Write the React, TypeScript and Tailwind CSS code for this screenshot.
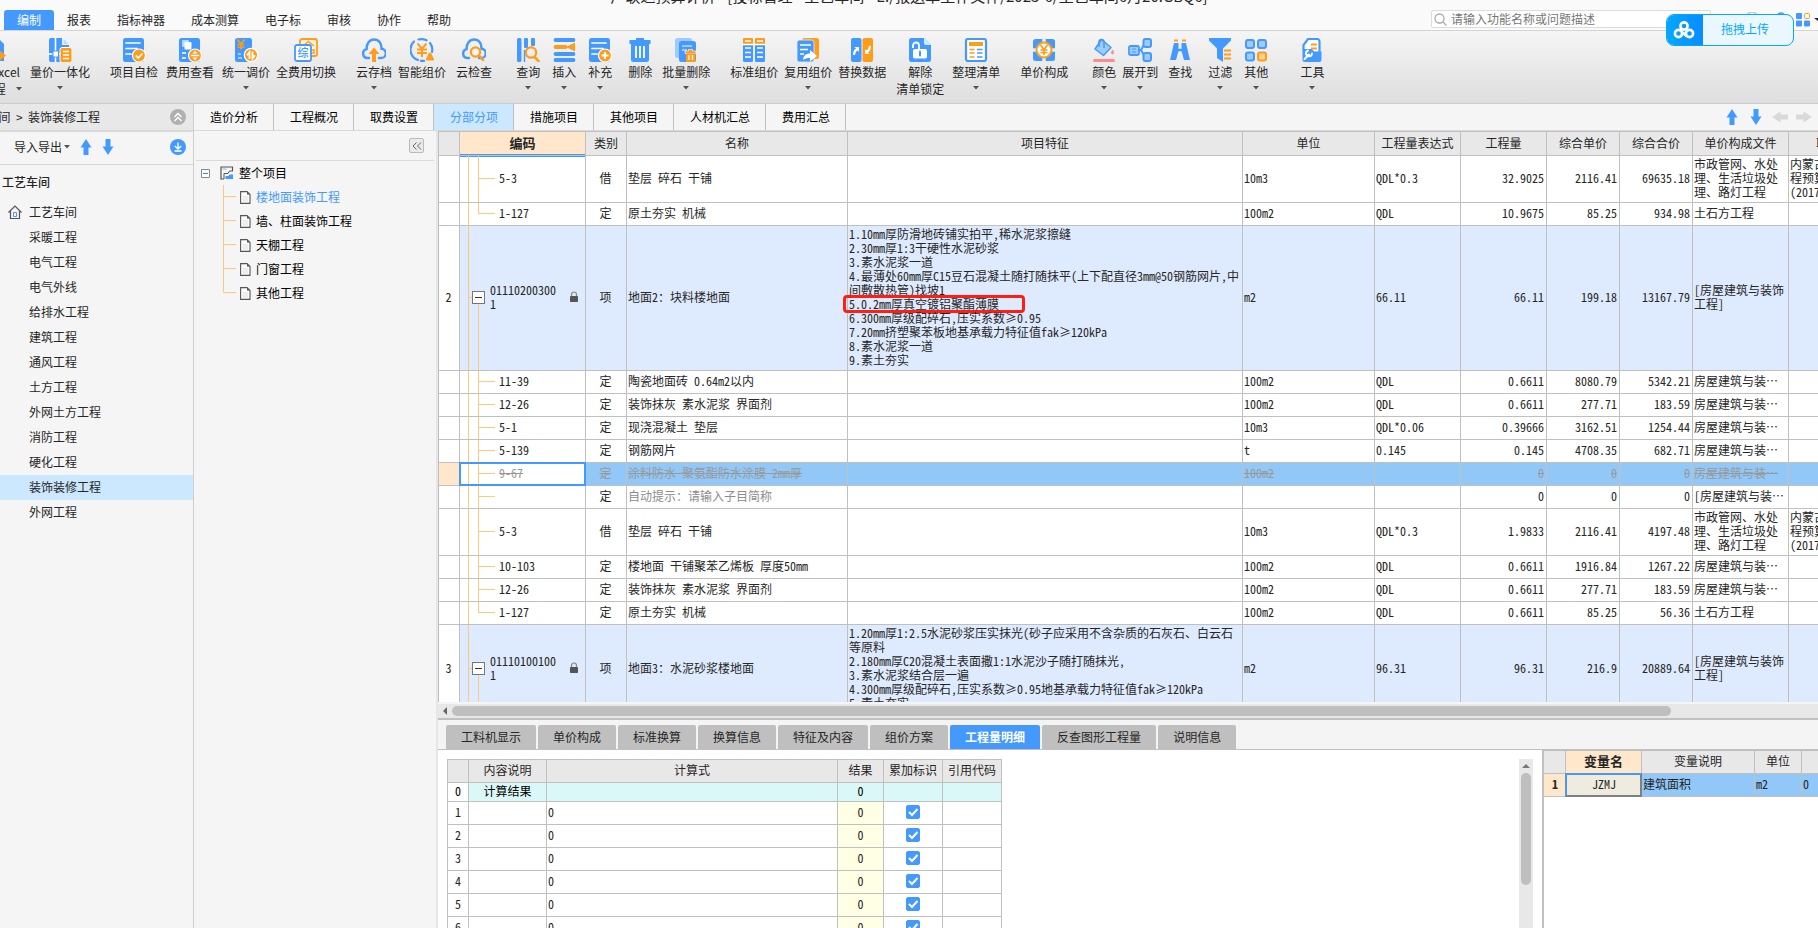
import { ReactNode } from 'react';
import clsx from 'clsx';

const BLUE = '#4499ff';
const ORANGE = '#ff9c1a';

/* ---------- 工具栏图标 ---------- */

function Svg({ children }: { children: ReactNode }) {
    return (
        <svg viewBox="0 0 24 24" className="size-6 shrink-0" fill="none" aria-hidden="true">
            {children}
        </svg>
    );
}

function Page() {
    return <rect x="1" y="0" width="21" height="24" rx="2.5" fill={BLUE} />;
}

function Yen({ x, y, color }: { x: number; y: number; color: string }) {
    return (
        <path
            d={`M${x - 3.5} ${y - 5}l3.5 4.5l3.5 -4.5M${x - 3.5} ${y}h7M${x - 3.5} ${y + 2.5}h7M${x} ${y - 0.5}v5.5`}
            stroke={color}
            strokeWidth="1.7"
        />
    );
}

const cloud = 'M7 20H5.5a4.5 4.5 0 0 1-.8-8.9C4.3 5.500 7.600 1.500 12.200 1.500s7.500 3.700 7.300 9.200a4.600 4.600 0 0 1-.8 9.300H17';

const icons: Record<string, ReactNode> = {
    excel: (
        <Svg>
            <path d="M2 0h14l6 6v17H2z" fill={BLUE} />
            <path d="M10 15h6v-4l8 6.500-8 6.500v-4h-6z" fill={ORANGE} />
        </Svg>
    ),
    integrate: (
        <Svg>
            <path d="M3 0h11v7h7v17H3a2 2 0 0 1-2-2V2a2 2 0 0 1 2-2z" fill={BLUE} />
            <path d="M15.500 1l5 5h-5z" fill="#b9dbff" />
            <path d="M7.500 0v24M0 16h13" stroke="#fff" strokeWidth="1.600" />
            <rect x="5" y="13" width="5.500" height="6" fill="#fff" stroke={BLUE} strokeWidth="1" />
            <rect x="12" y="9.500" width="12" height="15" rx="2" fill={ORANGE} stroke="#fff" strokeWidth="1" />
            <path d="M15 13.500h6M15 17h6M15 20.500h6" stroke="#fff" strokeWidth="1.500" />
        </Svg>
    ),
    check: (
        <Svg>
            <Page />
            <path d="M4 5h14M4 10.500h11M4 16h5" stroke="#fff" strokeWidth="1.700" strokeLinecap="round" />
            <circle cx="17" cy="17.500" r="6.500" fill={ORANGE} stroke="#fff" strokeWidth="1.200" />
            <path d="M13.800 17.500l2.500 2.500 4.200-4.500" stroke="#fff" strokeWidth="1.800" />
        </Svg>
    ),
    feeView: (
        <Svg>
            <Page />
            <rect x="4" y="2" width="7" height="7" rx="1" fill="#b9dbff" />
            <rect x="6.500" y="4" width="7" height="7.500" rx="1" fill="#fff" />
            <path d="M4 15h4M4 20h4" stroke="#fff" strokeWidth="1.700" />
            <circle cx="17" cy="17.500" r="6.500" fill={ORANGE} stroke="#fff" strokeWidth="1.200" />
            <path d="M12.800 17.500h8.400" stroke="#fff" strokeWidth="1.500" />
            <path d="M17 12.500l2.500 3h-5zM17 22.500l2.500-3h-5z" fill="#fff" />
        </Svg>
    ),
    adjust: (
        <Svg>
            <rect x="1" y="0" width="17" height="24" rx="2.500" fill={BLUE} />
            <Yen x={7} y={6.500} color={ORANGE} />
            <path d="M4 16h3M4 20h4" stroke="#b9dbff" strokeWidth="1.500" />
            <circle cx="17" cy="17" r="6.700" fill={ORANGE} stroke="#fff" strokeWidth="1.200" />
            <path d="M15.500 21v-7l-2.500 3.200M18.500 13.500v7l2.500-3.200" stroke="#fff" strokeWidth="1.800" />
        </Svg>
    ),
    switchFee: (
        <Svg>
            <rect x="6" y="1" width="17" height="17" rx="2" stroke={ORANGE} strokeWidth="1.800" fill="#fff2e0" />
            <path d="M9 8l5.500-4.500L20 8M14.500 7v3M17 12h3v3h-2" stroke={ORANGE} strokeWidth="1.500" />
            <rect x="1" y="7" width="16" height="16" rx="2" stroke={BLUE} strokeWidth="1.800" fill="#fff" />
            <text x="3.500" y="19" fontSize="11" fontWeight="500" fill={BLUE}>综</text>
        </Svg>
    ),
    cloudSave: (
        <Svg>
            <path d={cloud} stroke={BLUE} strokeWidth="2.400" strokeLinecap="round" />
            <path d="M12 9.500l5.500 6.500h-3.500v8h-4v-8H6.500z" fill={ORANGE} />
        </Svg>
    ),
    smart: (
        <Svg>
            <path d="M8 22A11 11 0 0 1 4 3.500M8.500 1.500a11 11 0 0 1 8 .8M20 5a11 11 0 0 1 2 9M11 22.900h3" stroke={BLUE} strokeWidth="2.200" strokeLinecap="round" />
            <path d="M7.500 5.500L12 11l4.500-5.500M7 11.500h10M7 15h10M12 11v8" stroke={ORANGE} strokeWidth="2" />
            <path d="M20 14.500c1.500 0 2 3 4 6.500 0 1-.5 1.500-1.500 1.500h-5c-1 0-1.500-.5-1.500-1.500 2-3.500 2.500-6.500 4-6.500z" fill={ORANGE} />
        </Svg>
    ),
    cloudCheck: (
        <Svg>
            <path d={cloud} stroke={BLUE} strokeWidth="2.400" strokeLinecap="round" />
            <circle cx="13.500" cy="14" r="4.600" stroke={ORANGE} strokeWidth="2.200" fill="#f4f4f4" />
            <path d="M17 17.500l4 4.500" stroke={ORANGE} strokeWidth="2.500" strokeLinecap="round" />
        </Svg>
    ),
    query: (
        <Svg>
            <rect x="1" y="0" width="4.500" height="24" rx="1.500" fill={BLUE} />
            <rect x="8" y="0" width="4" height="10" rx="1" fill={BLUE} />
            <rect x="15" y="0" width="4" height="8" rx="1" fill={BLUE} />
            <path d="M8.500 12v12" stroke={BLUE} strokeWidth="1.500" />
            <circle cx="15" cy="14.500" r="5.200" stroke={ORANGE} strokeWidth="2.200" />
            <path d="M18.500 19l4 4" stroke={ORANGE} strokeWidth="2.500" strokeLinecap="round" />
        </Svg>
    ),
    insert: (
        <Svg>
            <path d="M3.500 2h18M3.500 16h18M3.500 22h18" stroke={BLUE} strokeWidth="3.800" strokeLinecap="round" />
            <path d="M3.500 9h10" stroke={ORANGE} strokeWidth="3.800" strokeLinecap="round" />
            <path d="M14 9l9-4.500v9z" fill={ORANGE} />
        </Svg>
    ),
    supplement: (
        <Svg>
            <Page />
            <path d="M4 5h14M4 10.500h11M4 16h5" stroke="#fff" strokeWidth="1.700" strokeLinecap="round" />
            <circle cx="17" cy="17.500" r="6.500" fill={ORANGE} stroke="#fff" strokeWidth="1.200" />
            <path d="M17 14v7M13.500 17.500h7" stroke="#fff" strokeWidth="1.800" />
        </Svg>
    ),
    trash: (
        <Svg>
            <path d="M8 0h8v2h6.500v4h-21V2H8z" fill={BLUE} />
            <path d="M3 6h18v15.500a2.500 2.500 0 0 1-2.500 2.500h-13A2.500 2.500 0 0 1 3 21.500z" fill={BLUE} />
            <path d="M8 8v12M12 8v12M16 8v12" stroke="#fff" strokeWidth="1.800" />
        </Svg>
    ),
    batchTrash: (
        <Svg>
            <rect x="1" y="0" width="17" height="20" rx="2.500" fill="#9cccff" />
            <rect x="5" y="3" width="17" height="21" rx="2.500" fill={BLUE} />
            <path d="M8 8h10M8 12h5" stroke="#b9dbff" strokeWidth="1.600" />
            <path d="M11 13h3.500v-1.500h4V13H22v2.500H11z" fill={ORANGE} stroke="#fff" strokeWidth=".6" />
            <path d="M12 15.500h9.500v8.500H12z" fill={ORANGE} />
            <path d="M15 17v5M18.500 17v5" stroke="#fff" strokeWidth="1.300" />
        </Svg>
    ),
    standard: (
        <Svg>
            <rect x="1" y="0" width="10" height="24" rx="1.500" fill={BLUE} />
            <rect x="13" y="0" width="10" height="24" rx="1.500" fill={BLUE} />
            <path d="M1 6V1.500A1.500 1.500 0 0 1 2.500 0h7A1.500 1.500 0 0 1 11 1.500V6zM13 6V1.500A1.500 1.500 0 0 1 14.500 0h7A1.500 1.500 0 0 1 23 1.500V6z" fill={ORANGE} />
            <path d="M3 3h6M15 3h6M3 10h6M3 14.500h6M3 19h6M15 10h6M15 14.500h6M15 19h6M1 6.500h10M13 6.500h10" stroke="#fff" strokeWidth="1.400" />
        </Svg>
    ),
    reuse: (
        <Svg>
            <rect x="6" y="0" width="17" height="21" rx="2.500" fill={ORANGE} />
            <rect x="1" y="2" width="17" height="22" rx="2.500" fill={BLUE} stroke="#eee" strokeWidth=".8" />
            <path d="M4 7h11M4 11.500h8M4 16h4" stroke="#fff" strokeWidth="1.600" />
            <path d="M7 22c.5-4.500 3-6.500 7-6.500V12l7 6-7 5.500V20c-3 0-5 .5-7 2z" fill="#fff" />
        </Svg>
    ),
    replace: (
        <Svg>
            <rect x="1" y="0" width="10.500" height="24" rx="2" fill={BLUE} />
            <rect x="12.500" y="0" width="10.500" height="24" rx="2" fill={ORANGE} />
            <path d="M3 17c0-3 .5-5 3-6.500L4.500 9H9v5l-1.500-1.500C5.500 14 5.500 15 5 17z" fill="#fff" />
            <path d="M21 8c0 3-1 5-3 6.500l1.500 1.500H15v-5l1.500 1.500C18 11.500 18.500 10 19 8z" fill="#fff" />
        </Svg>
    ),
    unlock: (
        <Svg>
            <path d="M3.500 0H16l7 7v14.500a2.500 2.500 0 0 1-2.500 2.500h-17A2.500 2.500 0 0 1 1 21.500v-19A2.500 2.500 0 0 1 3.500 0z" fill={BLUE} />
            <path d="M16 0l7 7h-5a2 2 0 0 1-2-2z" fill="#d5e9ff" />
            <path d="M5 10V7.500a3 3 0 0 1 6 0V11" stroke="#fff" strokeWidth="1.800" />
            <rect x="5" y="11" width="14" height="9.500" rx="1.800" fill="#fff" />
            <path d="M12 13.500v4" stroke={BLUE} strokeWidth="2" strokeLinecap="round" />
        </Svg>
    ),
    tidy: (
        <Svg>
            <rect x="2" y="1" width="20" height="22" rx="2" stroke={BLUE} strokeWidth="2.200" fill="#fff" />
            <rect x="5" y="4" width="14" height="4" fill={ORANGE} />
            <path d="M5.500 11.500h5M5.500 15h5M5.500 19h5" stroke={ORANGE} strokeWidth="1.700" />
            <path d="M13 11.500h5.500M13 15h5.500M13 19h5.500" stroke={BLUE} strokeWidth="1.700" />
        </Svg>
    ),
    compose: (
        <Svg>
            <rect x="1" y="1" width="22" height="22" rx="2.500" fill={BLUE} />
            <path d="M12 0v24M0 12h24" stroke="#ececec" strokeWidth="3.500" />
            <circle cx="12" cy="12" r="7.500" fill="#fff" stroke={ORANGE} strokeWidth="2" />
            <Yen x={12} y={12} color={ORANGE} />
        </Svg>
    ),
    color: (
        <Svg>
            <path d="M9.500 1.500L19 9.500l-7.500 8L3 11z" fill="#9cccff" stroke={BLUE} strokeWidth="1.500" strokeLinejoin="round" />
            <path d="M7 9V4a2.500 2.500 0 0 1 5 0v6" stroke={BLUE} strokeWidth="1.500" />
            <path d="M20.500 11.500c1 1.500 1.500 2.500 1.500 3.300a1.500 1.500 0 0 1-3 0c0-.8.5-1.800 1.500-3.300z" fill="#ff8c8c" />
            <rect x="1" y="21" width="22" height="3" rx="1.500" fill="#ff8c8c" />
        </Svg>
    ),
    expand: (
        <Svg>
            <path d="M9 12h4M13 12L17 5M13 12l4 7" stroke={BLUE} strokeWidth="2" />
            <rect x="1" y="8" width="10" height="9" rx="1.500" fill="#9cccff" stroke={BLUE} strokeWidth="1.800" />
            <path d="M4 11h4M4 14h4" stroke={BLUE} strokeWidth="1.200" />
            <rect x="15.500" y="1" width="7.500" height="8" rx="2" fill="#9cccff" stroke={BLUE} strokeWidth="2" />
            <rect x="15.500" y="15" width="7.500" height="8" rx="2" fill="#9cccff" stroke={BLUE} strokeWidth="2" />
        </Svg>
    ),
    find: (
        <Svg>
            <path d="M6 1.500h4v2H6zM14 1.500h4v2h-4z" fill={ORANGE} />
            <path d="M6 5h4.500v8L8 22H2zM18 5h-4.500v8L16 22h6z" fill={BLUE} />
            <path d="M10 12h4" stroke={BLUE} strokeWidth="2.500" />
        </Svg>
    ),
    filter: (
        <Svg>
            <path d="M1 0h22v2.500l-8 8V24l-6-4v-9.500l-8-8z" fill={BLUE} />
            <path d="M16 12.500h7M16 16.500h7M16 20.500h7" stroke={ORANGE} strokeWidth="2" />
        </Svg>
    ),
    other: (
        <Svg>
            <rect x="2" y="2" width="8" height="8" rx="2" fill="#9cccff" stroke={BLUE} strokeWidth="2" />
            <rect x="14" y="2" width="8" height="8" rx="2" fill="#9cccff" stroke={BLUE} strokeWidth="2" />
            <rect x="2" y="14.500" width="8" height="8" rx="2" fill="#9cccff" stroke={BLUE} strokeWidth="2" />
            <rect x="14" y="14.500" width="8" height="8" rx="2" fill="#ffd08f" stroke={ORANGE} strokeWidth="2" />
        </Svg>
    ),
    tool: (
        <Svg>
            <path d="M3.500 12V7l4.500-6h9a2.500 2.500 0 0 1 2.500 2.500V14" stroke={BLUE} strokeWidth="2.200" fill="#fff" />
            <path d="M11 6.500h6M11 10.500h6" stroke={ORANGE} strokeWidth="2.200" />
            <path d="M2.500 11h9l3 2.500h7v8a2.500 2.500 0 0 1-2.500 2.500h-14a2.500 2.500 0 0 1-2.500-2.500z" fill={BLUE} />
            <path d="M4.500 21l4.500-4.500M8 12.500a3 3 0 1 0 4 3" stroke="#fff" strokeWidth="1.900" strokeLinecap="round" />
        </Svg>
    ),
};

interface Tool {
    icon: string;
    label: string;
    second?: string;
    menu?: boolean;
    gap: string;
}

const tools: Tool[] = [
    { icon: 'integrate', label: '量价一体化', menu: true, gap: 'ml-2.5' },
    { icon: 'check', label: '项目自检', gap: 'ml-5' },
    { icon: 'feeView', label: '费用查看', gap: 'ml-2' },
    { icon: 'adjust', label: '统一调价', menu: true, gap: 'ml-2' },
    { icon: 'switchFee', label: '全费用切换', gap: 'ml-1.5' },
    { icon: 'cloudSave', label: '云存档', menu: true, gap: 'ml-5' },
    { icon: 'smart', label: '智能组价', gap: 'ml-1.5' },
    { icon: 'cloudCheck', label: '云检查', gap: 'ml-2.5' },
    { icon: 'query', label: '查询', menu: true, gap: 'ml-6' },
    { icon: 'insert', label: '插入', menu: true, gap: 'ml-3' },
    { icon: 'supplement', label: '补充', menu: true, gap: 'ml-3' },
    { icon: 'trash', label: '删除', gap: 'ml-4' },
    { icon: 'batchTrash', label: '批量删除', menu: true, gap: 'ml-2.5' },
    { icon: 'standard', label: '标准组价', gap: 'ml-5' },
    { icon: 'reuse', label: '复用组价', menu: true, gap: 'ml-1.5' },
    { icon: 'replace', label: '替换数据', gap: 'ml-1.5' },
    { icon: 'unlock', label: '解除', second: '清单锁定', gap: 'ml-2.5' },
    { icon: 'tidy', label: '整理清单', menu: true, gap: 'ml-2' },
    { icon: 'compose', label: '单价构成', gap: 'ml-5' },
    { icon: 'color', label: '颜色', menu: true, gap: 'ml-6' },
    { icon: 'expand', label: '展开到', menu: true, gap: 'ml-1.5' },
    { icon: 'find', label: '查找', gap: 'ml-2.5' },
    { icon: 'filter', label: '过滤', menu: true, gap: 'ml-4' },
    { icon: 'other', label: '其他', menu: true, gap: 'ml-3' },
    { icon: 'tool', label: '工具', menu: true, gap: 'ml-8' },
];

function Caret() {
    return (
        <svg viewBox="0 0 6 4" className="h-1 w-1.5 shrink-0" aria-hidden="true">
            <path d="M0 0h6L3 3.500z" fill="#555" />
        </svg>
    );
}

function Arrow({ dir, color }: { dir: 'up' | 'down' | 'left' | 'right'; color: string }) {
    return (
        <svg
            viewBox="0 0 16 16"
            className={clsx('size-4', dir === 'down' && 'rotate-180', dir === 'left' && '-rotate-90', dir === 'right' && 'rotate-90')}
            aria-hidden="true"
        >
            <path d="M8 0l5.500 8.500h-3V16h-5V8.500h-3z" fill={color} />
        </svg>
    );
}

/* ---------- 顶部 ---------- */

const menus = ['编制', '报表', '指标神器', '成本测算', '电子标', '审核', '协作', '帮助'];

function Header() {
    return (
        <header className="relative h-[31px] shrink-0 border-b border-[#d4d4d4] bg-[#fafafa]">
            <div className="flex h-2.5 justify-center overflow-hidden">
                <p className="-mt-3 h-4 whitespace-nowrap text-[15px] leading-4">
                    广联达预算计价 - [投标管理 - 工艺车间 - E:/报送单工作文件/2023-6/工艺车间6月20.GBQ6]
                </p>
            </div>
            <div className="flex h-5 items-stretch pl-1">
                <nav className="flex">
                    {menus.map((m, i) => (
                        <a key={m} href="#" className={clsx('flex items-center px-[13px]', i === 0 && 'rounded-t-[3px] bg-[#4499ff] text-white')}>
                            {m}
                        </a>
                    ))}
                </nav>
                <label className="ml-auto mr-[107px] flex h-[18px] w-[280px] items-center gap-1 rounded-xs border border-[#dcdcdc] bg-white pl-0.5">
                    <svg viewBox="0 0 13 13" className="size-[13px] shrink-0" fill="none" stroke="#aaa" strokeWidth="1.300" aria-hidden="true">
                        <circle cx="5.500" cy="5.500" r="4.500" />
                        <path d="M9 9l3.500 3.500" />
                    </svg>
                    <input
                        aria-label="搜索功能"
                        placeholder="请输入功能名称或问题描述"
                        className="w-full bg-transparent outline-none placeholder:text-[#777777]"
                    />
                </label>
            </div>
            <div className="absolute right-0 top-3">
                <svg viewBox="0 0 74 15" className="h-[15px] w-[74px]" fill="none" aria-hidden="true">
                    <circle cx="8" cy="6" r="6" stroke="#a9d2ff" strokeWidth="1.500" />
                    <circle cx="37" cy="5" r="4" stroke={BLUE} strokeWidth="1.500" />
                    <rect x="52" y="1" width="6" height="6" rx="1" fill={BLUE} />
                    <rect x="60.500" y="1.500" width="5" height="5" rx="1" stroke={ORANGE} />
                    <rect x="52" y="8.500" width="6" height="6" rx="1" fill={BLUE} />
                    <rect x="60" y="8.500" width="6" height="6" rx="1" fill={BLUE} />
                    <path d="M70 6h4v3z" fill="#222" />
                </svg>
            </div>
            <button type="button" className="absolute right-6 top-3.5 z-10 flex h-8 w-32 overflow-hidden rounded-lg border border-[#06a7ff] bg-[#ebf7ff] text-[#06a7ff]">
                <span className="flex h-full w-9 items-center justify-center bg-gradient-to-r from-[#06a7ff] to-[#0a8cff] pr-0.5">
                    <svg viewBox="0 0 22 20" className="h-5 w-[22px]" fill="none" stroke="#fff" strokeWidth="2.600" aria-hidden="true">
                        <circle cx="11" cy="6" r="3.600" />
                        <circle cx="5.500" cy="13.500" r="3.600" />
                        <circle cx="16.500" cy="13.500" r="3.600" />
                        <path d="M8.500 11.500l5 4.500" />
                    </svg>
                </span>
                <span className="flex h-full flex-1 items-center justify-center pb-0.5 pr-1.5">拖拽上传</span>
            </button>
        </header>
    );
}

function Toolbar() {
    return (
        <div className="flex h-[73px] shrink-0 items-start whitespace-nowrap border-b border-[#cccccc] bg-gradient-to-b from-[#f5f5f5] to-[#dedede] pt-[7px]">
            <div className="flex w-5 shrink-0 justify-end">
                <button type="button" className="flex shrink-0 flex-col items-center">
                    {icons.excel}
                    <span className="mt-px leading-[18px]">导入Excel</span>
                    <span className="relative leading-4">
                        工程
                        <span className="absolute -right-4 top-1.5 flex">
                            <Caret />
                        </span>
                    </span>
                </button>
            </div>
            {tools.map((t) => (
                <button key={t.label} type="button" className={clsx('flex shrink-0 flex-col items-center', t.gap)}>
                    {icons[t.icon]}
                    <span className="mt-px leading-[18px]">{t.label}</span>
                    {t.second && <span className="leading-4">{t.second}</span>}
                    {t.menu && (
                        <span className="flex h-3.5 items-center">
                            <Caret />
                        </span>
                    )}
                </button>
            ))}
        </div>
    );
}

/* ---------- 左侧单位工程 ---------- */

const units = [
    '工艺车间', '采暖工程', '电气工程', '电气外线', '给排水工程', '建筑工程', '通风工程',
    '土方工程', '外网土方工程', '消防工程', '硬化工程', '装饰装修工程', '外网工程',
];

function UnitSidebar() {
    return (
        <aside className="w-[194px] shrink-0 overflow-hidden border-r border-[#cfcfcf]">
            <div className="flex h-7 items-center justify-between border-b-2 border-[#d9d9d9] bg-[#e8e8e8] pr-[7px]">
                <div className="flex w-[100px] justify-end whitespace-nowrap">工艺车间 &nbsp;&gt;&nbsp; 装饰装修工程</div>
                <button type="button" aria-label="收起">
                    <svg viewBox="0 0 16 16" className="size-4" aria-hidden="true">
                        <circle cx="8" cy="8" r="8" fill="#b0b0b0" />
                        <path d="M4.500 8L8 4.500 11.500 8M4.500 12L8 8.500l3.500 3.500" stroke="#fff" strokeWidth="1.400" fill="none" />
                    </svg>
                </button>
            </div>
            <div className="flex h-[33px] items-center border-b border-[#d4d4d4] pb-0.5 pl-3.5 pr-[7px]">
                <button type="button" className="flex items-center gap-0.5">
                    导入导出
                    <Caret />
                </button>
                <button type="button" aria-label="上移" className="ml-2"><Arrow dir="up" color={BLUE} /></button>
                <button type="button" aria-label="下移" className="ml-1.5"><Arrow dir="down" color={BLUE} /></button>
                <button type="button" aria-label="下载" className="ml-auto">
                    <svg viewBox="0 0 16 16" className="size-4" aria-hidden="true">
                        <circle cx="8" cy="8" r="8" fill={BLUE} />
                        <path d="M8 3.500v6M4.800 7L8 10l3.200-3M4.500 12h7" stroke="#fff" strokeWidth="1.400" fill="none" />
                    </svg>
                </button>
            </div>
            <h2 className="flex h-[35px] items-center pb-0.5 pl-0.5 font-medium">工艺车间</h2>
            <ul>
                {units.map((u, i) => (
                    <li key={u}>
                        <a href="#" className={clsx('flex h-[25px] items-center pb-0.5', u === '装饰装修工程' && 'bg-[#cce8ff]')}>
                            <span className="flex w-[29px] pl-2">
                                {i === 0 && (
                                    <svg viewBox="0 0 14 14" className="size-3.5" fill="none" aria-hidden="true">
                                        <path d="M.5 7.500L7 1l6.500 6.500M2.500 6v7.500h9V6" stroke="#555" strokeWidth="1.200" />
                                        <path d="M5.500 7.500h3v4h-3z" stroke={BLUE} />
                                    </svg>
                                )}
                            </span>
                            {u}
                        </a>
                    </li>
                ))}
            </ul>
        </aside>
    );
}

/* ---------- 分部树 ---------- */

const sections = ['楼地面装饰工程', '墙、柱面装饰工程', '天棚工程', '门窗工程', '其他工程'];

function SectionTree() {
    return (
        <aside className="w-[244px] shrink-0 border-r-2 border-[#e6e6e6] text-black">
            <div className="mx-0.5 flex h-[30px] items-center justify-end border-b border-[#d9d9d9] pr-2.5">
                <button type="button" aria-label="折叠" className="flex size-[15px] items-center justify-center rounded-xs border border-[#bbbbbb] bg-[#eaeaea]">
                    <svg viewBox="0 0 10 8" className="h-2 w-2.5" fill="none" stroke="#666" aria-hidden="true">
                        <path d="M4.500 .5L1 4l3.500 3.500M9 .5L5.500 4 9 7.500" />
                    </svg>
                </button>
            </div>
            <div className="flex h-6 items-center pl-[7px]">
                <svg viewBox="0 0 9 9" className="size-[9px]" fill="none" aria-hidden="true">
                    <path d="M.5.5h8v8h-8z" stroke="#888" fill="#fff" />
                    <path d="M2 4.500h5" stroke="#1d9bd1" />
                </svg>
                <svg viewBox="0 0 14 14" className="ml-2.5 size-3.5" fill="none" aria-hidden="true">
                    <path d="M12.500 5V1H1v12h3" stroke="#555" strokeWidth="1.200" />
                    <path d="M2.500 3h4" stroke="#9cccff" strokeWidth="1.500" />
                    <path d="M4 13V7.500h4L9.500 5H13" stroke="#555" />
                    <path d="M5.500 10h3l1-1.500H13V13H5.500z" fill={BLUE} />
                </svg>
                <span className="ml-[5px]">整个项目</span>
            </div>
            <ul>
                {sections.map((s, i) => (
                    <li key={s} className="flex h-6 items-center pl-[29px]">
                        <svg viewBox="0 0 14 24" className="h-6 w-3.5" fill="none" stroke="#ffc87d" aria-hidden="true">
                            <path d={i === sections.length - 1 ? 'M.5 0V11.5H13' : 'M.5 0V24M.5 11.5H13'} />
                        </svg>
                        <svg viewBox="0 0 11 13" className="ml-[3px] h-[13px] w-[11px]" fill="#fff" aria-hidden="true">
                            <path d="M.6.6h6.400L10 3.600V12.400H.6z" stroke="#555" strokeWidth="1.100" />
                            <path d="M7 .6V3.600h3z" fill="#555" />
                            <path d="M2.500 6h5.500M2.500 8h5.500M2.500 10h5.500" stroke="#ddd" />
                        </svg>
                        <a href="#" className={clsx('ml-[5px]', i === 0 && 'text-[#4499ff]')}>{s}</a>
                    </li>
                ))}
            </ul>
        </aside>
    );
}

/* ---------- 清单表格 ---------- */

interface Row {
    no?: string;
    code: string[];
    kind: string;
    name: string;
    feature?: string[];
    unit?: string;
    expr?: string;
    qty: string;
    price: string;
    total: string;
    file: string[];
    major?: string[];
    state?: 'item' | 'selected' | 'hint';
    last?: boolean;
}

const PIPE = ['市政管网、水处', '理、生活垃圾处', '理、路灯工程'];
const MAJOR = ['内蒙古自治区市政工', '程预算定额', '(2017)'];
const HOUSE = ['房屋建筑与装…'];

const rows: Row[] = [
    { code: ['5-3'], kind: '借', name: '垫层 碎石 干铺', unit: '10m3', expr: 'QDL*0.3', qty: '32.9025', price: '2116.41', total: '69635.18', file: PIPE, major: MAJOR },
    { code: ['1-127'], kind: '定', name: '原土夯实 机械', unit: '100m2', expr: 'QDL', qty: '10.9675', price: '85.25', total: '934.98', file: ['土石方工程'], last: true },
    {
        no: '2',
        code: ['01110200300', '1'],
        kind: '项',
        name: '地面2：块料楼地面',
        feature: [
            '1.10mm厚防滑地砖铺实拍平,稀水泥浆擦缝',
            '2.30mm厚1:3干硬性水泥砂浆',
            '3.素水泥浆一道',
            '4.最薄处60mm厚C15豆石混凝土随打随抹平(上下配直径3mm@50钢筋网片,中',
            '间敷散热管)找坡1',
            '5.0.2mm厚真空镀铝聚酯薄膜',
            '6.300mm厚级配碎石,压实系数≥0.95',
            '7.20mm挤塑聚苯板地基承载力特征值fak≥120kPa',
            '8.素水泥浆一道',
            '9.素土夯实',
        ],
        unit: 'm2', expr: '66.11', qty: '66.11', price: '199.18', total: '13167.79',
        file: ['[房屋建筑与装饰', '工程]'],
        state: 'item',
    },
    { code: ['11-39'], kind: '定', name: '陶瓷地面砖 0.64m2以内', unit: '100m2', expr: 'QDL', qty: '0.6611', price: '8080.79', total: '5342.21', file: HOUSE },
    { code: ['12-26'], kind: '定', name: '装饰抹灰 素水泥浆 界面剂', unit: '100m2', expr: 'QDL', qty: '0.6611', price: '277.71', total: '183.59', file: HOUSE },
    { code: ['5-1'], kind: '定', name: '现浇混凝土 垫层', unit: '10m3', expr: 'QDL*0.06', qty: '0.39666', price: '3162.51', total: '1254.44', file: HOUSE },
    { code: ['5-139'], kind: '定', name: '钢筋网片', unit: 't', expr: '0.145', qty: '0.145', price: '4708.35', total: '682.71', file: HOUSE },
    { code: ['9-67'], kind: '定', name: '涂料防水 聚氨酯防水涂膜 2mm厚', unit: '100m2', qty: '0', price: '0', total: '0', file: HOUSE, state: 'selected' },
    { code: [''], kind: '定', name: '自动提示：请输入子目简称', qty: '0', price: '0', total: '0', file: ['[房屋建筑与装…'], state: 'hint' },
    { code: ['5-3'], kind: '借', name: '垫层 碎石 干铺', unit: '10m3', expr: 'QDL*0.3', qty: '1.9833', price: '2116.41', total: '4197.48', file: PIPE, major: MAJOR },
    { code: ['10-103'], kind: '定', name: '楼地面 干铺聚苯乙烯板 厚度50mm', unit: '100m2', expr: 'QDL', qty: '0.6611', price: '1916.84', total: '1267.22', file: HOUSE },
    { code: ['12-26'], kind: '定', name: '装饰抹灰 素水泥浆 界面剂', unit: '100m2', expr: 'QDL', qty: '0.6611', price: '277.71', total: '183.59', file: HOUSE },
    { code: ['1-127'], kind: '定', name: '原土夯实 机械', unit: '100m2', expr: 'QDL', qty: '0.6611', price: '85.25', total: '56.36', file: ['土石方工程'], last: true },
    {
        no: '3',
        code: ['01110100100', '1'],
        kind: '项',
        name: '地面3：水泥砂浆楼地面',
        feature: [
            '1.20mm厚1:2.5水泥砂浆压实抹光(砂子应采用不含杂质的石灰石、白云石',
            '等原料',
            '2.180mm厚C20混凝土表面撒1:1水泥沙子随打随抹光,',
            '3.素水泥浆结合层一遍',
            '4.300mm厚级配碎石,压实系数≥0.95地基承载力特征值fak≥120kPa',
            '5.素土夯实',
        ],
        unit: 'm2', expr: '96.31', qty: '96.31', price: '216.9', total: '20889.64',
        file: ['[房屋建筑与装饰', '工程]'],
        state: 'item',
    },
];

const HEADS = ['类别', '名称', '项目特征', '单位', '工程量表达式', '工程量', '综合单价', '综合合价', '单价构成文件', '取费专业'];

function Lines({ text }: { text?: string[] }) {
    return <>{text?.map((t) => <div key={t}>{t}</div>)}</>;
}

function CodeCell({ row }: { row: Row }) {
    const item = row.state === 'item';
    return (
        <td className={clsx('relative', row.state === 'selected' && 'bg-white')}>
            <span className="absolute inset-y-0 left-2 w-px bg-[#ffc87d]" />
            {item ? (
                <>
                    <span className="absolute left-2 top-1/2 -mt-px h-px w-1 bg-[#ffc87d]" />
                    <span className="absolute bottom-0 left-[18px] top-1/2 w-px bg-[#ffc87d]" />
                </>
            ) : (
                <>
                    <span className={clsx('absolute left-[18px] top-0 w-px bg-[#ffc87d]', row.last ? 'bottom-1/2' : 'bottom-0')} />
                    <span className="absolute left-[18px] top-1/2 -mt-px h-px w-[17px] bg-[#ffc87d]" />
                </>
            )}
            {row.state === 'selected' && <span className="absolute -inset-px border-2 border-[#4499ff]" />}
            {item ? (
                <div className="relative flex items-center pl-[11px] pr-1">
                    <button type="button" aria-label="折叠子目" className="flex size-[13px] items-center justify-center border border-[#777777] bg-white">
                        <span className="h-px w-[7px] bg-[#333333]" />
                    </button>
                    <div className="ml-[5px] flex-1">
                        <Lines text={row.code} />
                    </div>
                    <svg viewBox="0 0 10 12" className="h-3 w-2.5" aria-hidden="true">
                        <path d="M2.500 6V3.500a2.500 2.500 0 0 1 5 0V6" stroke="#888" strokeWidth="1.200" fill="none" />
                        <rect x="1" y="5" width="8" height="6" rx=".8" fill="#555" />
                    </svg>
                </div>
            ) : (
                <div className="pl-[38px]">
                    <Lines text={row.code} />
                </div>
            )}
        </td>
    );
}

function BillGrid() {
    return (
        <div className="min-h-0 flex-1 overflow-hidden bg-white">
            <table className="w-[calc(100%+74px)] table-fixed border-separate border-spacing-0 border-l border-t border-[#c0c0c0] leading-[14px] [font-feature-settings:'hwid'] [&_td]:whitespace-nowrap [&_td]:border-b [&_td]:border-r [&_td]:border-[#c0c0c0] [&_td]:pb-[3px] [&_td]:pl-px [&_td]:pr-0.5 [&_td]:pt-px [&_th]:border-b [&_th]:border-r [&_th]:border-[#c0c0c0] [&_th]:pb-0.5">
                <colgroup>
                    <col className="w-[21px]" />
                    <col className="w-[126px]" />
                    <col className="w-[41px]" />
                    <col className="w-[221px]" />
                    <col className="w-[395px]" />
                    <col className="w-[132px]" />
                    <col className="w-[86px]" />
                    <col className="w-[86px]" />
                    <col className="w-[73px]" />
                    <col className="w-[73px]" />
                    <col className="w-[96px]" />
                    <col />
                </colgroup>
                <thead>
                    <tr className="h-6 bg-[#e8e8e8]">
                        <th aria-label="序号" />
                        <th className="bg-[#ffe7cc] text-[13px] font-bold shadow-[inset_0_-1px_0_#4499ff,0_1px_0_#4499ff]">编码</th>
                        {HEADS.map((h) => (
                            <th key={h} className="font-normal">{h}</th>
                        ))}
                    </tr>
                </thead>
                <tbody>
                    {rows.map((r, i) => (
                        <tr
                            key={i}
                            className={clsx(
                                'h-[23px]',
                                r.state === 'item' && 'bg-[#deeafe]',
                                r.state === 'selected' && 'bg-[#91c8f8] text-[#999999] line-through',
                            )}
                        >
                            <td className={clsx('text-center', r.state === 'selected' ? 'bg-[#ffe7cc]' : 'bg-white')}>{r.no}</td>
                            <CodeCell row={r} />
                            <td className="text-center">{r.kind}</td>
                            <td className={clsx(r.state === 'hint' && 'text-[#8c8c8c]')}>{r.name}</td>
                            <td>
                                {r.feature?.map((f, n) => (
                                    <div key={f} className="relative">
                                        {f}
                                        {r.no === '2' && n === 5 && (
                                            <span className="absolute -left-1.5 -top-0.5 h-[18px] w-[182px] rounded-sm border-[3px] border-[#ff1e12]" />
                                        )}
                                    </div>
                                ))}
                            </td>
                            <td>{r.unit}</td>
                            <td>{r.expr}</td>
                            <td className="text-right">{r.qty}</td>
                            <td className="text-right">{r.price}</td>
                            <td className="text-right">{r.total}</td>
                            <td><Lines text={r.file} /></td>
                            <td><Lines text={r.major} /></td>
                        </tr>
                    ))}
                </tbody>
            </table>
        </div>
    );
}

/* ---------- 底部明细 ---------- */

const detailTabs = ['工料机显示', '单价构成', '标准换算', '换算信息', '特征及内容', '组价方案', '工程量明细', '反查图形工程量', '说明信息'];

function DetailTable() {
    return (
        <table className="w-[555px] table-fixed border-separate border-spacing-0 self-start border-l border-t border-[#c0c0c0] text-center leading-[14px] [font-feature-settings:'hwid'] [&_td]:border-b [&_td]:border-r [&_td]:border-[#c0c0c0] [&_td]:pb-0.5 [&_th]:border-b [&_th]:border-r [&_th]:border-[#c0c0c0] [&_th]:pb-0.5 [&_th]:font-normal">
            <colgroup>
                <col className="w-[21px]" />
                <col className="w-[78px]" />
                <col className="w-[291px]" />
                <col className="w-[46px]" />
                <col className="w-[59px]" />
                <col className="w-[59px]" />
            </colgroup>
            <thead>
                <tr className="h-[23px] bg-[#e8e8e8]">
                    <th aria-label="序号" />
                    <th>内容说明</th>
                    <th>计算式</th>
                    <th>结果</th>
                    <th>累加标识</th>
                    <th>引用代码</th>
                </tr>
            </thead>
            <tbody>
                <tr className="h-[19px] bg-[#dbf8f8] text-black">
                    <td className="bg-white">0</td>
                    <td>计算结果</td>
                    <td />
                    <td>0</td>
                    <td />
                    <td />
                </tr>
                {[1, 2, 3, 4, 5, 6].map((n) => (
                    <tr key={n} className="h-[23px]">
                        <td>{n}</td>
                        <td />
                        <td className="pl-px text-left">0</td>
                        <td className="bg-[#ffffe6]">0</td>
                        <td>
                            <label className="grid place-items-center">
                                <input
                                    type="checkbox"
                                    defaultChecked
                                    aria-label={`第${n}行累加标识`}
                                    className="col-start-1 row-start-1 size-3.5 appearance-none rounded-xs border border-[#4499ff] checked:bg-[#4499ff]"
                                />
                                <svg viewBox="0 0 14 14" className="pointer-events-none col-start-1 row-start-1 size-3.5" fill="none" aria-hidden="true">
                                    <path d="M3 7l3 3 5.500-6" stroke="#fff" strokeWidth="2" />
                                </svg>
                            </label>
                        </td>
                        <td />
                    </tr>
                ))}
            </tbody>
        </table>
    );
}

function VariableTable() {
    return (
        <div className="w-[276px] shrink-0 overflow-hidden border-l-2 border-t border-[#c0c0c0]">
            <table className="w-[306px] table-fixed border-separate border-spacing-0 leading-[14px] [font-feature-settings:'hwid'] [&_td]:border-b [&_td]:border-r [&_td]:border-[#c0c0c0] [&_td]:pb-0.5 [&_td]:pl-px [&_th]:border-b [&_th]:border-r [&_th]:border-[#c0c0c0] [&_th]:pb-0.5">
                <colgroup>
                    <col className="w-[22px]" />
                    <col className="w-[76px]" />
                    <col className="w-[113px]" />
                    <col className="w-[47px]" />
                    <col />
                </colgroup>
                <thead>
                    <tr className="h-[23px] bg-[#e8e8e8]">
                        <th aria-label="序号" />
                        <th className="bg-[#ffe7cc] text-[13px] font-bold">变量名</th>
                        <th className="font-normal">变量说明</th>
                        <th className="font-normal">单位</th>
                        <th aria-label="值" />
                    </tr>
                </thead>
                <tbody>
                    <tr className="h-[23px] bg-[#91c8f8]">
                        <td className="bg-[#ffe7cc] text-center font-bold">1</td>
                        <td className="relative bg-[#efecdf] text-center">
                            <span className="absolute -inset-px border-2 border-b-[#808080] border-l-[#4499ff] border-r-[#808080] border-t-[#4499ff]" />
                            JZMJ
                        </td>
                        <td>建筑面积</td>
                        <td>m2</td>
                        <td>0</td>
                    </tr>
                </tbody>
            </table>
        </div>
    );
}

function DetailPanel() {
    return (
        <section className="flex h-[210px] shrink-0 flex-col border-t-2 border-[#c0c0c0]">
            <div className="flex h-[30px] shrink-0 items-end gap-0.5 border-b border-[#c0c0c0] bg-[#f4f4f4] pl-2">
                {detailTabs.map((t) => (
                    <button
                        key={t}
                        type="button"
                        className={clsx('h-6 rounded-t-xs px-[15px] pb-px', t === '工程量明细' ? 'bg-[#4499ff] font-bold text-white' : 'bg-[#bfbfbf]')}
                    >
                        {t}
                    </button>
                ))}
            </div>
            <div className="flex min-h-0 flex-1 overflow-hidden bg-white">
                <div className="flex min-w-0 flex-1 justify-between overflow-hidden pl-[9px] pr-[9px] pt-[9px]">
                    <DetailTable />
                    <div className="flex w-3.5 flex-col items-center bg-[#e8e8e8]">
                        <svg viewBox="0 0 8 4" className="mt-[5px] h-1 w-2 shrink-0" aria-hidden="true">
                            <path d="M4 0l4 4H0z" fill="#777" />
                        </svg>
                        <div className="mt-[5px] h-28 w-2.5 rounded-full bg-[#bfbfbf]" />
                    </div>
                </div>
                <VariableTable />
            </div>
        </section>
    );
}

const viewTabs = ['造价分析', '工程概况', '取费设置', '分部分项', '措施项目', '其他项目', '人材机汇总', '费用汇总'];

export default function App() {
    return (
        <div className="flex h-screen flex-col overflow-hidden bg-[#f5f5f5] font-['Noto_Sans_CJK_SC',sans-serif] text-xs text-[#262626]">
            <Header />
            <Toolbar />
            <div className="flex min-h-0 flex-1">
                <UnitSidebar />
                <div className="flex min-w-0 flex-1 flex-col">
                    <div className="flex h-[27px] shrink-0 border-b border-[#d9d9d9]">
                        {viewTabs.map((t) => (
                            <button
                                key={t}
                                type="button"
                                className={clsx('border-r border-[#c0c0c0] pl-4 pr-[15px]', t === '分部分项' ? 'bg-[#cce8ff] text-[#4499ff]' : 'text-black')}
                            >
                                {t}
                            </button>
                        ))}
                        <div className="ml-auto flex items-center gap-2 pr-1.5">
                            <button type="button" aria-label="上移"><Arrow dir="up" color={BLUE} /></button>
                            <button type="button" aria-label="下移"><Arrow dir="down" color={BLUE} /></button>
                            <button type="button" aria-label="后退"><Arrow dir="left" color="#d9d9d9" /></button>
                            <button type="button" aria-label="前进"><Arrow dir="right" color="#d9d9d9" /></button>
                        </div>
                    </div>
                    <div className="flex min-h-0 flex-1">
                        <SectionTree />
                        <main className="flex min-w-0 flex-1 flex-col">
                            <BillGrid />
                            <div className="mt-0.5 flex h-3.5 shrink-0 items-center bg-[#e8e8e8] pl-[5px]">
                                <svg viewBox="0 0 4 8" className="h-2 w-1" aria-hidden="true">
                                    <path d="M4 0v8L0 4z" fill="#666" />
                                </svg>
                                <div className="ml-[5px] mr-[147px] h-2.5 flex-1 rounded-full bg-[#bfbfbf]" />
                            </div>
                            <DetailPanel />
                        </main>
                    </div>
                </div>
            </div>
        </div>
    );
}
